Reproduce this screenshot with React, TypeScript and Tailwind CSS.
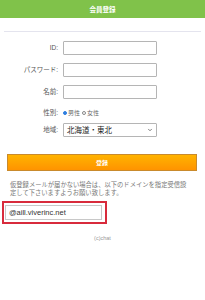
import { ChevronDown } from 'lucide-react'

const jp = { fontFamily: '"Noto Sans CJK JP", "Noto Sans", sans-serif' }
const labelFont = { fontFamily: '"Liberation Sans", "Noto Sans CJK JP", sans-serif' }

function FieldRow({ label, children }: { label: string; children: React.ReactNode }) {
  return (
    <div className="flex items-center">
      <span
        className="w-[59px] shrink-0 pr-[1px] text-right text-[6.5px] leading-none text-[#555]"
        style={labelFont}
      >
        {label}
      </span>
      <div className="ml-[4px]">{children}</div>
    </div>
  )
}

function TextBox() {
  return <div className="h-[14px] w-[94px] rounded-[1px] border border-[#b5b5b5] bg-white" />
}

function Radio({ checked, label }: { checked?: boolean; label: string }) {
  return (
    <span className="flex items-center gap-[1px]">
      <span
        className={`h-[4px] w-[4px] rounded-full border ${
          checked ? 'border-[#2f7fe0] bg-[#2f7fe0]' : 'border-[#888] bg-white'
        }`}
      />
      <span className="text-[6px] leading-none text-[#666]">{label}</span>
    </span>
  )
}

export default function App() {
  return (
    <div className="min-h-[300px] w-[205px] bg-white" style={jp}>
      <header className="flex h-[18px] items-center justify-center bg-[#80c24a]">
        <h1 className="text-[6.5px] font-bold leading-none text-white">会員登録</h1>
      </header>

      <div className="mx-[4px] mt-[13px] border-t border-[#e4e4ee]" />

      <div className="mt-[9px] flex flex-col">
        <div className="flex flex-col gap-[8px]">
          <FieldRow label="ID:">
            <TextBox />
          </FieldRow>
          <FieldRow label="パスワード:">
            <TextBox />
          </FieldRow>
          <FieldRow label="名前:">
            <TextBox />
          </FieldRow>
        </div>

        <div className="mt-[9px]">
          <FieldRow label="性別:">
            <div className="flex h-[10px] items-center gap-[2px]">
              <Radio checked label="男性" />
              <Radio label="女性" />
            </div>
          </FieldRow>
        </div>

        <div className="mt-[5px]">
          <FieldRow label="地域:">
            <div className="flex h-[14px] w-[94px] items-center justify-between rounded-[1px] border border-[#b5b5b5] bg-white pl-[3px] pr-[3px]">
              <span className="text-[7.5px] leading-none text-[#222]">北海道・東北</span>
              <ChevronDown className="h-[6px] w-[6px] text-[#555]" strokeWidth={3} />
            </div>
          </FieldRow>
        </div>

        <button
          type="button"
          className="ml-[7px] mt-[17px] flex h-[17px] w-[190px] items-center justify-center border border-[#c98a2c] bg-gradient-to-b from-[#ffb300] to-[#ff9300] text-[6px] font-bold leading-none text-white"
        >
          登録
        </button>
      </div>

      <p className="mt-[10px] whitespace-nowrap px-[10px] text-[6.3px] leading-[8px] text-[#777]">
        仮登録メールが届かない場合は、以下のドメインを指定受信設
        <br />
        定して下さいますようお願い致します。
      </p>

      <div className="ml-[2px] mt-[4px] w-[105px] border-2 border-[#d82b3c] px-[1px] py-[2px]">
        <div
          className="flex h-[15px] w-[97px] items-center border border-[#c8c8c8] bg-white pl-[3px] text-[7.5px] leading-none text-[#333]"
          style={{ fontFamily: '"Liberation Sans", Arial, sans-serif' }}
        >
          @aill.viverinc.net
        </div>
      </div>

      <p
        className="mt-[12px] text-center text-[5.5px] leading-none text-[#999]"
        style={{ fontFamily: '"Liberation Sans", Arial, sans-serif' }}
      >
        (c)chat
      </p>
    </div>
  )
}
